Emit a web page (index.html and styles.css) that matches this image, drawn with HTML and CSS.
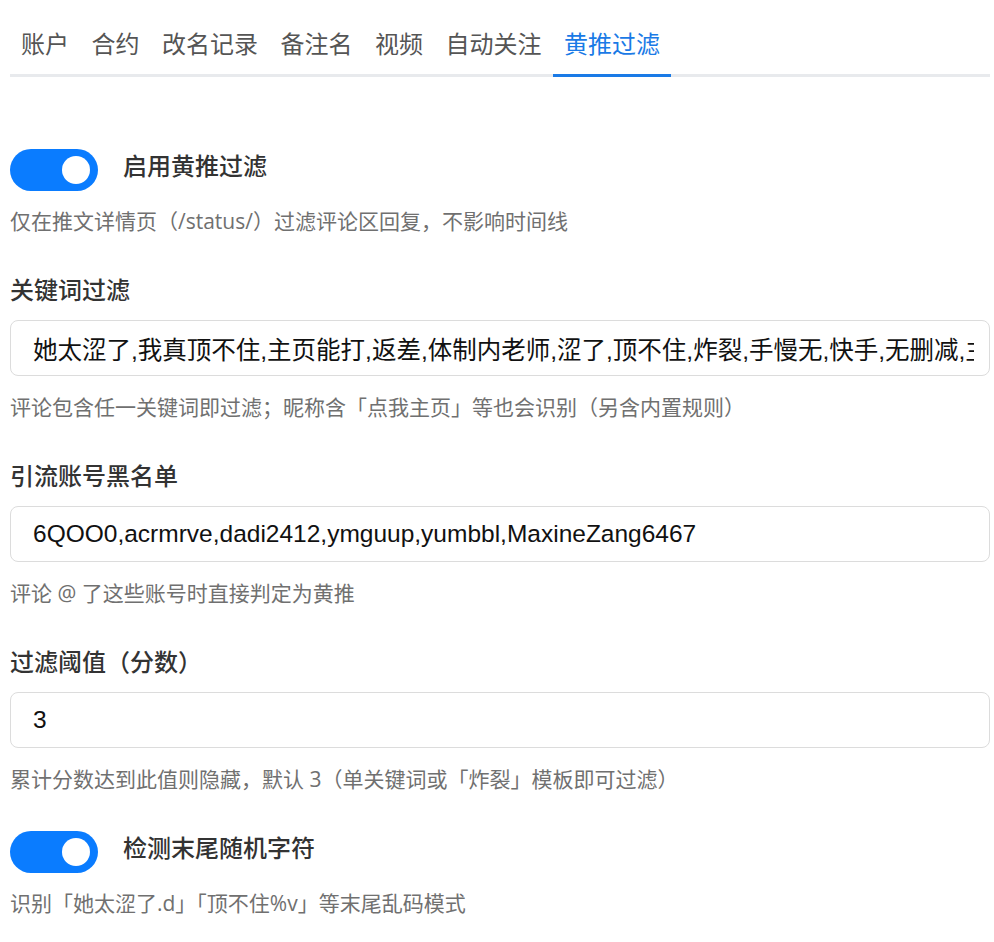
FILE: index.html
```html
<!DOCTYPE html>
<html lang="zh-CN">
<head>
    <meta charset="UTF-8">
    <meta name="viewport" content="width=device-width, initial-scale=1.0">
    <title>黄推过滤</title>
    <link rel="stylesheet" href="styles.css">
</head>
<body>
    <div class="panel">
        <div class="tabs">
            <div class="tab">账户</div>
            <div class="tab">合约</div>
            <div class="tab">改名记录</div>
            <div class="tab">备注名</div>
            <div class="tab">视频</div>
            <div class="tab">自动关注</div>
            <div class="tab active">黄推过滤</div>
        </div>

        <div class="content">
            <div class="group">
                <div class="switch-row">
                    <span class="switch on"><span class="knob"></span></span>
                    <span class="switch-label">启用黄推过滤</span>
                </div>
                <div class="desc">仅在推文详情页（/status/）过滤评论区回复，不影响时间线</div>
            </div>

            <div class="group">
                <div class="field-title">关键词过滤</div>
                <input class="field" type="text" value="她太涩了,我真顶不住,主页能打,返差,体制内老师,涩了,顶不住,炸裂,手慢无,快手,无删减,主页">
                <div class="hint">评论包含任一关键词即过滤；昵称含「点我主页」等也会识别（另含内置规则）</div>
            </div>

            <div class="group">
                <div class="field-title">引流账号黑名单</div>
                <input class="field" type="text" value="6QOO0,acrmrve,dadi2412,ymguup,yumbbl,MaxineZang6467">
                <div class="hint">评论 @ 了这些账号时直接判定为黄推</div>
            </div>

            <div class="group">
                <div class="field-title">过滤阈值（分数）</div>
                <input class="field" type="text" value="3">
                <div class="hint">累计分数达到此值则隐藏，默认 3（单关键词或「炸裂」模板即可过滤）</div>
            </div>

            <div class="group">
                <div class="switch-row">
                    <span class="switch on"><span class="knob"></span></span>
                    <span class="switch-label">检测末尾随机字符</span>
                </div>
                <div class="desc">识别「她太涩了.d」「顶不住%v」等末尾乱码模式</div>
            </div>
        </div>
    </div>
</body>
</html>
```

FILE: styles.css
```css
body { margin: 0; background: #fff; font-family: "Open Sans", "Noto Sans CJK SC", sans-serif; color: #333; }
.panel { padding: 18px 4px 0 10px; }

/* tab bar */
.tabs { display: flex; border-bottom: 3px solid #e8eaed; }
.tab { font-size: 24px; line-height: 36px; padding: 8px 11px 12px; margin-right: 0.5px; margin-bottom: -3px; color: #555; border-bottom: 3px solid transparent; white-space: nowrap; }
.tab.active { color: #1a7ae6; border-bottom-color: #1a7ae6; }

.content { padding-top: 71px; }
.group { margin-bottom: 36px; }

/* toggle switch */
.switch-row { display: flex; align-items: flex-start; }
.switch { position: relative; display: block; width: 88px; height: 42px; margin-top: 1px; border-radius: 21px; background: #ccc; flex-shrink: 0; }
.switch.on { background: #0a7cff; }
.knob { position: absolute; top: 7px; left: 8px; width: 28px; height: 28px; border-radius: 50%; background: #fff; }
.switch.on .knob { left: 52px; }
.switch-label { margin-left: 25px; font-size: 24px; line-height: 36px; font-weight: 500; color: #333; }
.desc { margin-top: 15px; font-size: 21px; line-height: 30px; color: #707070; }

/* text fields */
.field-title { font-size: 24px; line-height: 36px; font-weight: 500; color: #333; margin-bottom: 12px; }
.field { display: block; box-sizing: border-box; width: 100%; height: 56px; padding: 0 15px 0 22px; border: 1px solid #dcdcdc; border-radius: 8px; font-family: "Liberation Sans", "Noto Sans CJK SC", sans-serif; font-size: 24.5px; color: #111; background: #fff; outline: none; }
.hint { margin-top: 16px; font-size: 21px; line-height: 30px; color: #707070; }
```
